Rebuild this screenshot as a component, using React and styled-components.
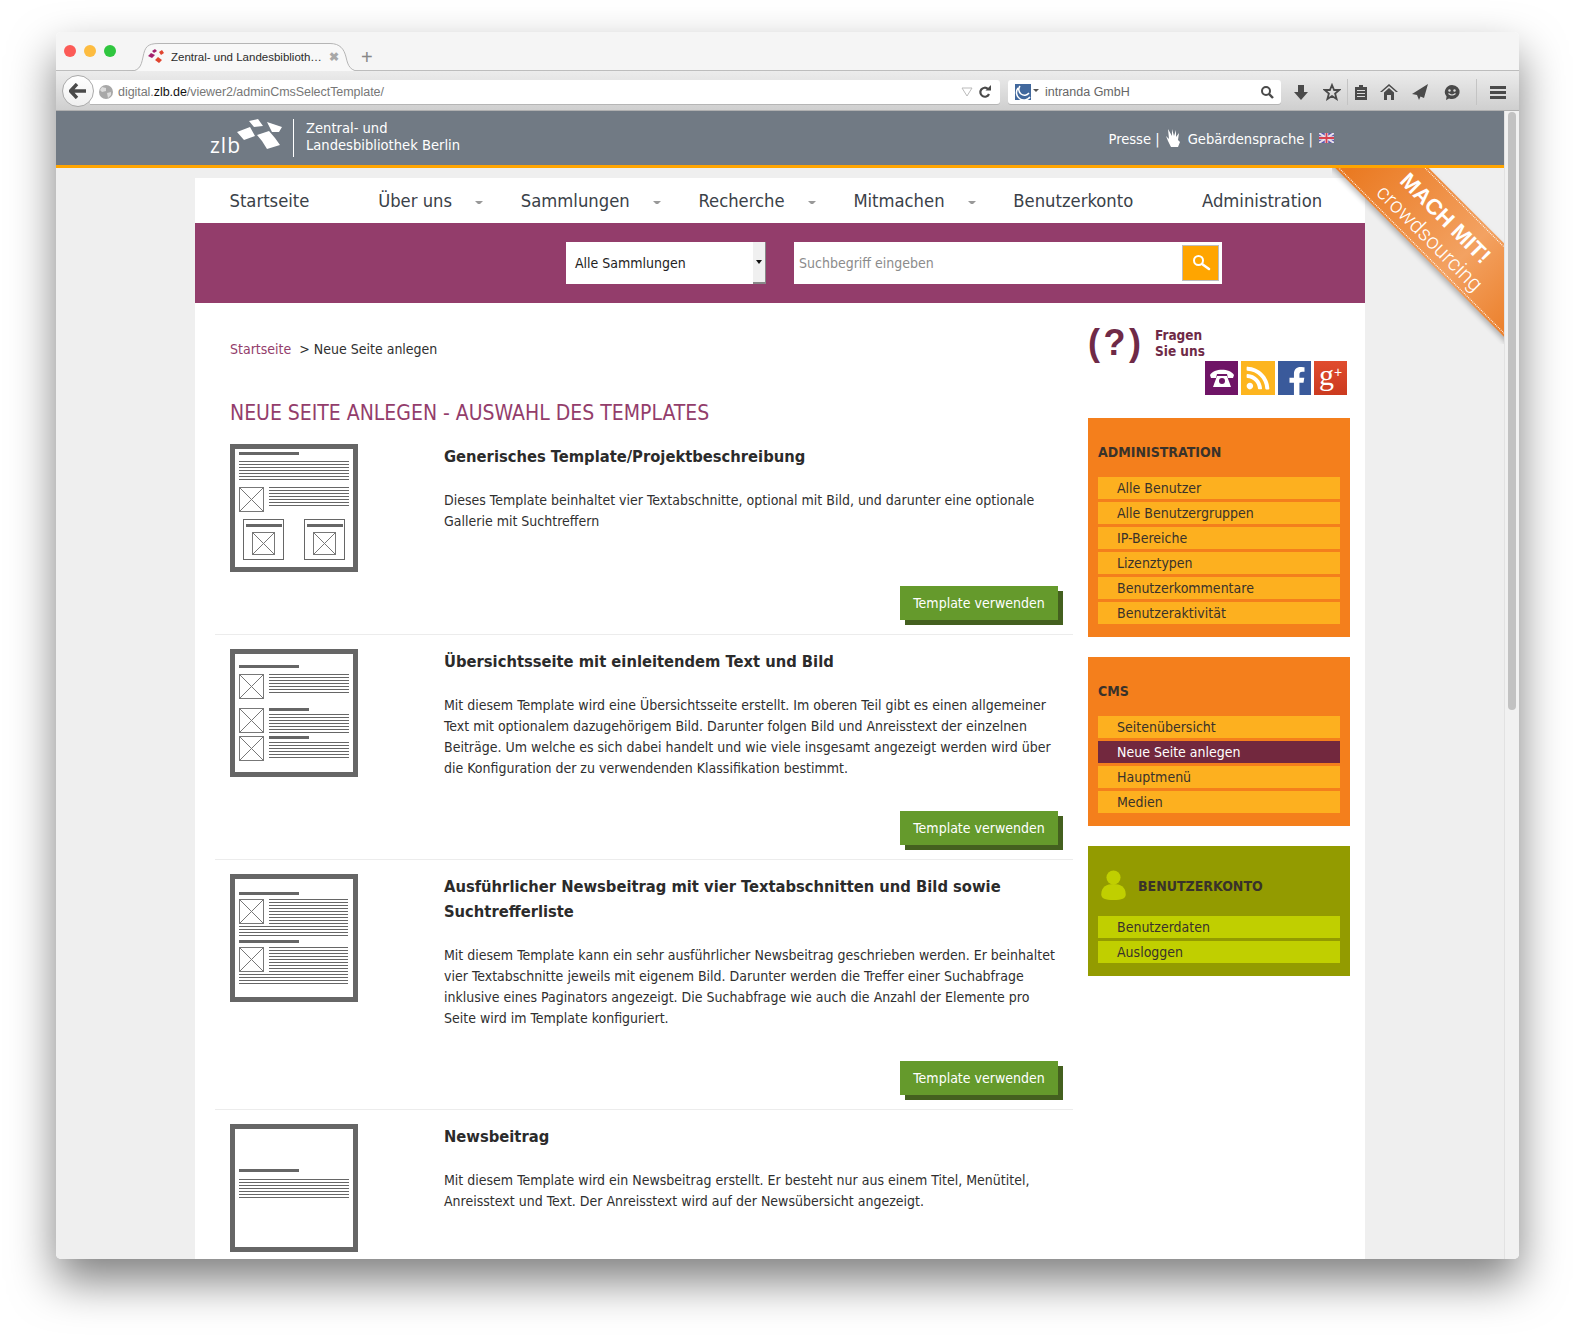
import styled, { createGlobalStyle } from "styled-components";
import { FaFacebookF, FaRss } from "react-icons/fa";

const GlobalStyle = createGlobalStyle`
  html, body {
    margin: 0;
    padding: 0;
    background: #fff;
  }
  body {
    width: 1575px;
    height: 1339px;
    overflow: hidden;
    font-family: "DejaVu Sans", sans-serif;
    font-stretch: condensed;
    color: #2f2f2f;
  }
`;

const Stage = styled.div`
  padding: 32px 56px 0;
`;

const Win = styled.div`
  position: relative;
  width: 1463px;
  height: 1227px;
  border-radius: 5px;
  overflow: hidden;
  display: flex;
  flex-direction: column;
`;

const WinShadow = styled.div`
  width: 1463px;
  height: 1227px;
  border-radius: 5px;
  box-shadow: 0 22px 45px rgba(0, 0, 0, 0.5);
`;

const TabBar = styled.div`
  height: 38px;
  flex: none;
  background: #f5f5f5;
  border-bottom: 1px solid #bdbdbd;
  display: flex;
  align-items: flex-end;
  font-family: "Liberation Sans", sans-serif;
  font-stretch: normal;
`;

const Lights = styled.div`
  display: flex;
  gap: 8px;
  padding: 0 0 13px 8px;
`;

const Light = styled.span`
  width: 12px;
  height: 12px;
  border-radius: 50%;
  background: ${(p) => p.$c};
`;

const Tab = styled.div`
  position: relative;
  width: 235px;
  height: 28px;
  margin-left: 11px;
  margin-bottom: -1px;
  display: flex;
  align-items: center;
  padding-left: 21px;
  box-sizing: border-box;
  font-size: 11.5px;
  color: #2b2b2b;
  gap: 7px;
`;

const TabShape = styled.svg`
  position: absolute;
  left: 0;
  top: 0;
`;

const TabIcon = styled.svg`
  position: relative;
`;

const TabLabel = styled.span`
  position: relative;
  width: 150px;
  white-space: nowrap;
`;

const TabClose = styled.span`
  position: relative;
  font-size: 12px;
  font-weight: bold;
  color: #a8a8a8;
  margin-left: 1px;
`;

const NewTab = styled.span`
  font-size: 20px;
  color: #888;
  margin: 0 0 3px -1px;
  line-height: 20px;
`;

const ToolBar = styled.div`
  position: relative;
  height: 40px;
  flex: none;
  background: linear-gradient(#ececec, #cfcfcf);
  border-bottom: 1px solid #b0b0b0;
  box-sizing: border-box;
  display: flex;
  align-items: center;
  padding: 2px 0 0 34px;
  font-family: "Liberation Sans", sans-serif;
  font-stretch: normal;
`;

const BackButton = styled.div`
  position: absolute;
  left: 6px;
  top: 4px;
  width: 32px;
  height: 32px;
  border-radius: 50%;
  background: linear-gradient(#fff, #f0f0f0);
  border: 1px solid #aaa;
  box-sizing: border-box;
  display: flex;
  align-items: center;
  justify-content: center;
  z-index: 1;
`;

const UrlBar = styled.div`
  width: 910px;
  height: 24px;
  background: #fff;
  border-radius: 0 3px 3px 0;
  box-shadow: 0 1px 0 #b5b5b5;
  display: flex;
  align-items: center;
  padding-left: 9px;
  box-sizing: border-box;
  font-size: 12.5px;
  color: #777;
`;

const UrlText = styled.span`
  margin-left: 5px;
  flex: 1;
  letter-spacing: -0.05px;
  b {
    font-weight: normal;
    color: #111;
  }
`;

const UrlDrop = styled.svg`
  margin-right: 5px;
`;

const UrlReload = styled.svg`
  margin-right: 8px;
`;

const SearchBar = styled.div`
  width: 273px;
  height: 24px;
  margin-left: 8px;
  background: #fff;
  border-radius: 3px;
  box-shadow: 0 1px 0 #b5b5b5;
  display: flex;
  align-items: center;
  padding: 0 7px;
  box-sizing: border-box;
  font-size: 12.5px;
  color: #666;
`;

const SearchName = styled.span`
  margin-left: 5px;
  flex: 1;
`;

const ToolIcons = styled.div`
  display: flex;
  align-items: center;
  margin-left: 4px;
`;

const ToolIcon = styled.div`
  width: ${(p) => p.$w}px;
  height: 26px;
  margin-left: ${(p) => p.$ml || 0}px;
  display: flex;
  align-items: center;
  justify-content: center;
  border-left: ${(p) => (p.$sep ? "1px solid #c4c4c4" : "none")};
  box-sizing: border-box;
`;

const Viewport = styled.div`
  position: relative;
  flex: 1;
  display: flex;
  min-height: 0;
`;

const Page = styled.div`
  width: 1448px;
  background: #efefef;
  overflow: hidden;
`;

const ScrollTrack = styled.div`
  flex: 1;
  background: #f1f1f1;
  border-left: 1px solid #e2e2e2;
  padding: 1px 3px 0 3px;
`;

const ScrollThumb = styled.div`
  height: 598px;
  background: #c2c2c2;
  border-radius: 4px;
`;

const Header = styled.div`
  height: 54px;
  background: #717a84;
  border-bottom: 3px solid #ffa500;
  display: flex;
  align-items: center;
  padding: 0 170px 0 152px;
  color: #fff;
`;

const Logo = styled.div`
  position: relative;
  width: 85px;
  height: 38px;
`;

const LogoWord = styled.span`
  position: absolute;
  left: 2px;
  bottom: 1px;
  font-family: "Open Sans", sans-serif;
  font-stretch: normal;
  font-size: 21px;
  line-height: 21px;
  letter-spacing: 1px;
`;

const LogoMark = styled.svg`
  position: absolute;
  left: 29px;
  top: 0;
`;

const LogoName = styled.div`
  border-left: 1px solid #fff;
  padding: 0 0 5px 12px;
  height: 38px;
  box-sizing: border-box;
  display: flex;
  flex-direction: column;
  justify-content: center;
  font-size: 14.6px;
  line-height: 17px;
`;

const HeaderLinks = styled.div`
  margin-left: auto;
  display: flex;
  align-items: center;
  gap: 6px;
  font-size: 14.6px;
`;

const Column = styled.div`
  width: 1170px;
  margin: 10px 0 0 139px;
`;

const Nav = styled.div`
  height: 45px;
  background: #fff;
  display: flex;
  align-items: center;
  gap: 68.8px;
  padding-left: 34.5px;
  font-size: 18.25px;
  color: #3a4148;
  white-space: nowrap;
`;

const NavItem = styled.span`
  position: relative;
  ${(p) =>
    p.$sub &&
    `&::after {
      content: "";
      position: absolute;
      right: -31px;
      top: 11px;
      border: 3px solid transparent;
      border-top: 3px solid #999;
      border-bottom: 0;
      width: 2px;
    }`}
`;

const SearchStrip = styled.div`
  height: 80px;
  background: #933d6b;
  display: flex;
  align-items: center;
  padding-left: 371px;
`;

const SelectBox = styled.div`
  width: 200px;
  height: 42px;
  background: #fff;
  display: flex;
  align-items: center;
  justify-content: space-between;
  padding-left: 9px;
  box-sizing: border-box;
  font-size: 14px;
  color: #222;
  margin-right: 28px;
`;

const SelectArrow = styled.div`
  width: 13px;
  height: 42px;
  background: #f0f0f0;
  border-right: 1px solid #888;
  border-bottom: 2px solid #888;
  box-sizing: border-box;
  display: flex;
  align-items: center;
  justify-content: center;
  &::after {
    content: "";
    border: 3px solid transparent;
    border-top: 4px solid #111;
    border-bottom: 0;
  }
`;

const SearchField = styled.div`
  width: 428px;
  height: 42px;
  background: #fff;
  display: flex;
  align-items: center;
  justify-content: space-between;
  padding: 0 3px 0 5px;
  box-sizing: border-box;
  font-size: 14px;
  color: #8b8b8b;
`;

const SearchButton = styled.div`
  width: 37px;
  height: 36px;
  background: #ffa500;
  border: 1px solid #bdbdbd;
  box-sizing: border-box;
  display: flex;
  align-items: center;
  justify-content: center;
`;

const Main = styled.div`
  background: #fff;
  height: 960px;
  display: flex;
  padding-left: 20px;
`;

const Content = styled.div`
  width: 858px;
  margin-right: 15px;
`;

const Crumbs = styled.div`
  padding: 36px 0 0 15px;
  font-size: 14px;
  line-height: 20px;
  color: #2f2f2f;
  a {
    color: #933d6b;
    margin-right: 4px;
  }
`;

const Heading = styled.h1`
  margin: 40px 0 3px 15px;
  font-size: 21px;
  line-height: 28px;
  font-weight: normal;
  color: #933d6b;
`;

const Item = styled.div`
  display: flex;
  height: ${(p) => p.$h}px;
  padding: 14px 15px 0;
  box-sizing: border-box;
  border-bottom: ${(p) => (p.$last ? "none" : "1px solid #ececec")};
`;

const Thumb = styled.svg`
  flex: none;
  display: block;
`;

const ItemBody = styled.div`
  margin-left: 86px;
  flex: 1;
  display: flex;
  flex-direction: column;
  padding-bottom: 14px;
`;

const ItemTitle = styled.h2`
  margin: 0 0 21px;
  font-size: 16.4px;
  line-height: 25px;
  font-weight: bold;
  color: #2b2b2b;
`;

const ItemText = styled.p`
  margin: 0;
  font-size: 14px;
  line-height: 21px;
  color: #2f2f2f;
  white-space: nowrap;
`;

const UseButton = styled.div`
  width: 158px;
  height: 34px;
  background: #659a2c;
  box-shadow: 5px 5px 0 #44601f;
  color: #fff;
  font-size: 14px;
  display: flex;
  align-items: center;
  justify-content: center;
`;

const ButtonRow = styled.div`
  margin-top: auto;
  display: flex;
  justify-content: flex-end;
`;

const Side = styled.div`
  width: 262px;
  padding-top: 24px;
`;

const AskBlock = styled.div`
  display: flex;
  color: #6f2a47;
  height: 34px;
`;

const AskMark = styled.div`
  width: 67px;
  font-family: "Liberation Sans", sans-serif;
  font-stretch: normal;
  font-weight: bold;
  font-size: 36px;
  line-height: 32px;
  letter-spacing: 3.5px;
  white-space: nowrap;
`;

const AskText = styled.div`
  font-size: 13.5px;
  line-height: 16px;
  font-weight: bold;
`;

const Socials = styled.div`
  display: flex;
  justify-content: flex-end;
  gap: 3px;
  padding-right: 3px;
  margin-bottom: 23px;
`;

const Social = styled.div`
  width: ${(p) => p.$w || 33}px;
  height: 34px;
  background: ${(p) => p.$bg};
  color: #fff;
  display: flex;
  align-items: center;
  justify-content: center;
`;

const FbGlyph = styled(FaFacebookF)`
  width: 24px;
  height: 28px;
  margin: 6px 0 0 5px;
`;

const GooglePlus = styled.span`
  font-family: "Liberation Serif", serif;
  font-stretch: normal;
  font-size: 30px;
  line-height: 30px;
  margin-top: -6px;
  sup {
    font-family: "Liberation Sans", sans-serif;
    font-size: 14px;
    line-height: 0;
    vertical-align: 8px;
  }
`;

const Panel = styled.div`
  background: ${(p) => p.$bg};
  padding: 0 10px 13px;
  margin-bottom: 20px;
`;

const PanelHead = styled.div`
  height: ${(p) => p.$h || 59}px;
  padding-top: 9px;
  box-sizing: border-box;
  display: flex;
  align-items: center;
  gap: 12px;
  font-size: 14px;
  font-weight: bold;
  color: #39322a;
`;

const PersonIcon = styled.svg`
  margin-left: 3px;
`;

const PanelLink = styled.div`
  height: 22px;
  margin-bottom: 3px;
  padding-left: 19px;
  background: ${(p) => (p.$active ? "#72283e" : p.$bg)};
  color: ${(p) => (p.$active ? "#fff" : "#39322a")};
  font-size: 14px;
  line-height: 22px;
  &:last-child {
    margin-bottom: 0;
  }
`;

const RibbonClip = styled.div`
  position: absolute;
  left: 1276px;
  top: 57px;
  width: 172px;
  height: 176px;
  overflow: hidden;
`;

const RibbonBand = styled.div`
  position: absolute;
  left: -41px;
  top: 26px;
  width: 300px;
  height: 66px;
  transform: rotate(45deg);
  background: linear-gradient(90deg, #ea7a22 15%, #f3a262 62%, #ea7a22 95%);
  box-shadow: 0 3px 5px rgba(0, 0, 0, 0.25);
  color: #fff;
  font-family: "Liberation Sans", sans-serif;
  font-stretch: normal;
  text-align: center;
  box-sizing: border-box;
  padding-top: 11px;
  &::before {
    content: "";
    position: absolute;
    left: 0;
    right: 0;
    top: 2px;
    bottom: 2px;
    border-top: 1px dotted #fff;
    border-bottom: 1px dotted #fff;
  }
`;

const RibbonTop = styled.div`
  font-weight: bold;
  font-size: 22px;
  line-height: 25px;
  transform: translateX(-3px);
`;

const RibbonSub = styled.div`
  font-family: "Roboto", "Liberation Sans", sans-serif;
  font-size: 21.5px;
  line-height: 25px;
  font-weight: 300;
`;

const Frame = () => <rect x="2.5" y="2.5" width="123" height="123" fill="#fff" stroke="#666" strokeWidth="5" />;

const Bar = ({ x = 9, y, w = 60, h = 3 }) => <rect x={x} y={y} width={w} height={h} fill="#666" />;

const Lines = ({ x = 9, y, w = 110, n = 7 }) => (
  <>
    {Array.from({ length: n }, (_, i) => (
      <rect key={i} x={x} y={y + i * 3} width={w} height="1" fill="#666" />
    ))}
  </>
);

const Pic = ({ x = 9, y, s = 25 }) => (
  <g fill="none" stroke="#777" strokeWidth="1">
    <rect x={x + 0.5} y={y + 0.5} width={s - 1} height={s - 1} />
    <path d={`M${x} ${y}L${x + s} ${y + s}M${x + s} ${y}L${x} ${y + s}`} />
  </g>
);

const Card = ({ x }) => (
  <g>
    <rect x={x + 0.5} y="75.5" width="40" height="40" fill="none" stroke="#666" />
    <Bar x={x + 3} y={80} w={36} />
    <Pic x={x + 9} y={88} s={23} />
  </g>
);

const ThumbBox = ({ children }) => (
  <Thumb width="128" height="128" viewBox="0 0 128 128">
    <Frame />
    {children}
  </Thumb>
);

const thumbs = [
  <ThumbBox key="a">
    <Bar y={8} />
    <Lines y={17} />
    <Pic y={43} />
    <Lines x={39} y={43} w={80} />
    <Card x={13} />
    <Card x={74} />
  </ThumbBox>,
  <ThumbBox key="b">
    <Bar y={16} />
    <Pic y={25} />
    <Lines x={39} y={25} w={80} />
    <Pic y={59} />
    <Bar x={39} y={59} w={40} />
    <Lines x={39} y={65} w={80} />
    <Pic y={87} />
    <Bar x={39} y={87} w={40} />
    <Lines x={39} y={93} w={80} n={6} />
  </ThumbBox>,
  <ThumbBox key="c">
    <Bar y={18} />
    <Pic y={25} />
    <Lines x={39} y={25} w={79} n={9} />
    <Lines y={52} w={109} n={4} />
    <Bar y={66} />
    <Pic y={73} />
    <Lines x={39} y={73} w={79} n={9} />
    <Lines y={100} w={109} n={4} />
  </ThumbBox>,
  <ThumbBox key="d">
    <Bar y={45} />
    <Lines y={55} />
  </ThumbBox>,
];

const items = [
  {
    h: 205,
    title: "Generisches Template/Projektbeschreibung",
    text: ["Dieses Template beinhaltet vier Textabschnitte, optional mit Bild, und darunter eine optionale", "Gallerie mit Suchtreffern"],
  },
  {
    h: 225,
    title: "Übersichtsseite mit einleitendem Text und Bild",
    text: [
      "Mit diesem Template wird eine Übersichtsseite erstellt. Im oberen Teil gibt es einen allgemeiner",
      "Text mit optionalem dazugehörigem Bild. Darunter folgen Bild und Anreisstext der einzelnen",
      "Beiträge. Um welche es sich dabei handelt und wie viele insgesamt angezeigt werden wird über",
      "die Konfiguration der zu verwendenden Klassifikation bestimmt.",
    ],
  },
  {
    h: 250,
    title: ["Ausführlicher Newsbeitrag mit vier Textabschnitten und Bild sowie", "Suchtrefferliste"],
    text: [
      "Mit diesem Template kann ein sehr ausführlicher Newsbeitrag geschrieben werden. Er beinhaltet",
      "vier Textabschnitte jeweils mit eigenem Bild. Darunter werden die Treffer einer Suchabfrage",
      "inklusive eines Paginators angezeigt. Die Suchabfrage wie auch die Anzahl der Elemente pro",
      "Seite wird im Template konfiguriert.",
    ],
  },
  {
    h: 160,
    title: "Newsbeitrag",
    text: [
      "Mit diesem Template wird ein Newsbeitrag erstellt. Er besteht nur aus einem Titel, Menütitel,",
      "Anreisstext und Text. Der Anreisstext wird auf der Newsübersicht angezeigt.",
    ],
    last: true,
  },
];

const breakLines = (v) =>
  (Array.isArray(v) ? v : [v]).map((l, i) => (
    <span key={i}>
      {i > 0 && <br />}
      {l}
    </span>
  ));

const nav = [
  ["Startseite"],
  ["Über uns", true],
  ["Sammlungen", true],
  ["Recherche", true],
  ["Mitmachen", true],
  ["Benutzerkonto"],
  ["Administration"],
];

const Loupe = ({ size = 20, color = "#fff" }) => (
  <svg width={size} height={size} viewBox="0 0 20 20" fill="none" stroke={color}>
    <circle cx="7.5" cy="7.5" r="4.5" strokeWidth="2" />
    <path d="M11 11l7 5" strokeWidth="2.6" strokeLinecap="round" />
  </svg>
);

const Favicon = () => (
  <TabIcon width="16" height="16" viewBox="0 0 16 16">
    <path d="M0 7l3-3 4 2-3 3zM4 2l3-2 2 2-3 2z" fill="#a3206e" />
    <path d="M7 11l3-3 4 3-3 3zM11 3l3-2 2 3-3 2z" fill="#e0452f" />
  </TabIcon>
);

const Globe = () => (
  <svg width="14" height="14" viewBox="0 0 14 14">
    <circle cx="7" cy="7" r="7" fill="#a8a8a8" />
    <path d="M3 2l4 1 0 3-4 1-2-2zM8 8l4-1 0 3-3 3z" fill="#dcdcdc" />
  </svg>
);

const icons = {
  down: <path d="M6 2h6v7h4l-7 8-7-8h4z" fill="#4a4a4a" />,
  star: <path d="M9 2l2.100 5h5.200l-4.200 3.500 1.500 5.500L9 13l-4.600 3 1.500-5.500L1.700 7h5.200z" fill="none" stroke="#4a4a4a" strokeWidth="1.800" />,
  list: (
    <g fill="#4a4a4a">
      <path d="M3 4h4V2h4v2h4v13H3z" />
      <path d="M5 7h8v1H5zM5 10h8v1H5zM5 13h8v1H5z" fill="#d8d8d8" />
    </g>
  ),
  home: (
    <g fill="#4a4a4a">
      <path d="M9 1l9 8h-2L9 3 2 9H0z" />
      <path d="M9 5l5 4.500V17h-3v-5H7v5H4V9.500z" />
    </g>
  ),
  send: <path d="M17 1L1 11l5 1 2 5 1.500-3.500L13 15z" fill="#4a4a4a" />,
  chat: (
    <g>
      <path d="M9 2a7.500 7 0 1 1-3 13.400L3 17l.600-3.500A7.500 7 0 0 1 9 2z" fill="#4a4a4a" />
      <circle cx="6.500" cy="7.500" r="1.200" fill="#ddd" />
      <circle cx="11.500" cy="7.500" r="1.200" fill="#ddd" />
      <path d="M5.500 10.500q3.500 3 7 0" stroke="#ddd" strokeWidth="1.200" fill="none" />
    </g>
  ),
  menu: <path d="M1 3h16v3H1zM1 8h16v3H1zM1 13h16v3H1z" fill="#4a4a4a" />,
};

const toolIcons = [
  { name: "down", w: 31 },
  { name: "star", w: 31 },
  { name: "list", w: 26, sep: true },
  { name: "home", w: 31 },
  { name: "send", w: 32 },
  { name: "chat", w: 32 },
  { name: "menu", w: 43, sep: true, ml: 8 },
];

const Glyph = ({ name }) => (
  <svg width="18" height="18" viewBox="0 0 18 18">
    {icons[name]}
  </svg>
);

function App() {
  return (
    <>
      <GlobalStyle />
      <Stage>
        <WinShadow>
          <Win>
            <TabBar>
              <Lights>
                <Light $c="#fc5b57" />
                <Light $c="#fdbc40" />
                <Light $c="#2fc63f" />
              </Lights>
              <Tab>
                <TabShape width="235" height="29" viewBox="0 0 235 29">
                  <path d="M0 28.500C12 28.500 14 24 16 14 18 4 20 .5 32 .5H203C213 .5 217 6 219 14 221 23 223 28.500 235 28.500" fill="#f8f8f8" stroke="#b5b5b5" />
                </TabShape>
                <Favicon />
                <TabLabel>Zentral- und Landesbiblioth…</TabLabel>
                <TabClose>✖</TabClose>
              </Tab>
              <NewTab>+</NewTab>
            </TabBar>
            <ToolBar>
              <BackButton>
                <svg width="18" height="16" viewBox="0 0 18 16">
                  <path d="M8 1L1.500 8 8 15M2 8h15" fill="none" stroke="#4a4a4a" strokeWidth="3.400" />
                </svg>
              </BackButton>
              <UrlBar>
                <Globe />
                <UrlText>
                  digital.<b>zlb.de</b>/viewer2/adminCmsSelectTemplate/
                </UrlText>
                <UrlDrop width="12" height="10" viewBox="0 0 12 10">
                  <path d="M1 1h10L6 9z" fill="none" stroke="#bbb" />
                </UrlDrop>
                <UrlReload width="14" height="14" viewBox="0 0 14 14">
                  <path d="M11 9a4.500 4.500 0 1 1-1-5" fill="none" stroke="#4a4a4a" strokeWidth="2.200" />
                  <path d="M7.500 5.500H13V0z" fill="#4a4a4a" />
                </UrlReload>
              </UrlBar>
              <SearchBar>
                <svg width="25" height="16" viewBox="0 0 25 16">
                  <rect width="16" height="16" fill="#41689d" />
                  <path d="M3 4a7 7 0 0 0 12 9M5 2a5 5 0 0 0 9 7" fill="none" stroke="#fff" strokeWidth="1.500" />
                  <path d="M18 5h6l-3 3z" fill="#555" />
                </svg>
                <SearchName>intranda GmbH</SearchName>
                <svg width="14" height="14" viewBox="0 0 14 14" fill="none" stroke="#4a4a4a">
                  <circle cx="6" cy="6" r="4" strokeWidth="2" />
                  <path d="M9 9l4 4" strokeWidth="2.400" />
                </svg>
              </SearchBar>
              <ToolIcons>
                {toolIcons.map(({ name, w, sep, ml }) => (
                  <ToolIcon key={name} $w={w} $sep={sep} $ml={ml}>
                    <Glyph name={name} />
                  </ToolIcon>
                ))}
              </ToolIcons>
            </ToolBar>
            <Viewport>
              <Page>
                <Header>
                  <Logo>
                    <LogoWord>zlb</LogoWord>
                    <LogoMark width="46" height="30" viewBox="0 0 46 30" fill="#fff">
                      <path d="M0 13l13-5 5 9-11 4zM12 2l9-2 5 7-9 1zM30 3l15 5-3 5-7 0zM20 16l12-4 6 7 5 7-13 4-5-8z" />
                    </LogoMark>
                  </Logo>
                  <LogoName>
                    <span>Zentral- und</span>
                    <span>Landesbibliothek Berlin</span>
                  </LogoName>
                  <HeaderLinks>
                    <span>Presse |</span>
                    <svg width="16" height="20" viewBox="0 0 16 20" fill="#fff">
                      <path d="M2 1l4 7 0-7 2 7 2-6 0 7 3-4-1 7 2 2-2 5H5l-3-6-2-5 3 3z" />
                    </svg>
                    <span>Gebärdensprache |</span>
                    <svg width="15" height="10" viewBox="0 0 15 10">
                      <rect width="15" height="10" fill="#5a58b0" />
                      <path d="M0 0l15 10M15 0L0 10" stroke="#e8dfe8" strokeWidth="2" />
                      <path d="M7.500 0v10M0 5h15" stroke="#e8dfe8" strokeWidth="3.500" />
                      <path d="M7.500 0v10M0 5h15" stroke="#d8404f" strokeWidth="1.800" />
                    </svg>
                  </HeaderLinks>
                </Header>
                <Column>
                  <Nav>
                    {nav.map(([label, sub]) => (
                      <NavItem key={label} $sub={sub}>
                        {label}
                      </NavItem>
                    ))}
                  </Nav>
                  <SearchStrip>
                    <SelectBox>
                      Alle Sammlungen
                      <SelectArrow />
                    </SelectBox>
                    <SearchField>
                      Suchbegriff eingeben
                      <SearchButton>
                        <Loupe />
                      </SearchButton>
                    </SearchField>
                  </SearchStrip>
                  <Main>
                    <Content>
                      <Crumbs>
                        <a>Startseite</a> &gt; Neue Seite anlegen
                      </Crumbs>
                      <Heading>NEUE SEITE ANLEGEN - AUSWAHL DES TEMPLATES</Heading>
                      {items.map((item, i) => (
                        <Item key={i} $h={item.h} $last={item.last}>
                          {thumbs[i]}
                          <ItemBody>
                            <ItemTitle>{breakLines(item.title)}</ItemTitle>
                            <ItemText>{breakLines(item.text)}</ItemText>
                            {!item.last && (
                              <ButtonRow>
                                <UseButton>Template verwenden</UseButton>
                              </ButtonRow>
                            )}
                          </ItemBody>
                        </Item>
                      ))}
                    </Content>
                    <Side>
                      <AskBlock>
                        <AskMark>(?)</AskMark>
                        <AskText>
                          Fragen
                          <br />
                          Sie uns
                        </AskText>
                      </AskBlock>
                      <Socials>
                        <Social $bg="#6f1466">
                          <svg width="26" height="20" viewBox="0 0 26 20" fill="#fff">
                            <path d="M1 7C5 0 21 0 25 7l-1 3h-5l-1-4H8L7 10H2z" />
                            <path d="M8 8h10l4 11H4z" />
                            <circle cx="13" cy="13" r="3" fill="#6f1466" />
                          </svg>
                        </Social>
                        <Social $bg="#fdb51f" $w={34}>
                          <FaRss size={26} />
                        </Social>
                        <Social $bg="#3a5a9b">
                          <FbGlyph />
                        </Social>
                        <Social $bg="linear-gradient(#e04c2e, #cb3a1f)">
                          <GooglePlus>
                            g<sup>+</sup>
                          </GooglePlus>
                        </Social>
                      </Socials>
                      <Panel $bg="#f47f1c">
                        <PanelHead>ADMINISTRATION</PanelHead>
                        {["Alle Benutzer", "Alle Benutzergruppen", "IP-Bereiche", "Lizenztypen", "Benutzerkommentare", "Benutzeraktivität"].map((l) => (
                          <PanelLink key={l} $bg="#fdb01f">
                            {l}
                          </PanelLink>
                        ))}
                      </Panel>
                      <Panel $bg="#f47f1c">
                        <PanelHead>CMS</PanelHead>
                        {["Seitenübersicht", "Neue Seite anlegen", "Hauptmenü", "Medien"].map((l) => (
                          <PanelLink key={l} $bg="#fdb01f" $active={l === "Neue Seite anlegen"}>
                            {l}
                          </PanelLink>
                        ))}
                      </Panel>
                      <Panel $bg="#939b00">
                        <PanelHead $h={70}>
                          <PersonIcon width="25" height="32" viewBox="0 0 26 34" fill="#c0cf00">
                            <circle cx="13" cy="8" r="7.500" />
                            <path d="M0 26C0 18 6 15 13 15s13 3 13 11c0 4-4 6-13 6S0 30 0 26z" />
                          </PersonIcon>
                          BENUTZERKONTO
                        </PanelHead>
                        {["Benutzerdaten", "Ausloggen"].map((l) => (
                          <PanelLink key={l} $bg="#c0cf00">
                            {l}
                          </PanelLink>
                        ))}
                      </Panel>
                    </Side>
                  </Main>
                </Column>
              </Page>
              <ScrollTrack>
                <ScrollThumb />
              </ScrollTrack>
              <RibbonClip>
                <RibbonBand>
                  <RibbonTop>MACH MIT!</RibbonTop>
                  <RibbonSub>crowdsourcing</RibbonSub>
                </RibbonBand>
              </RibbonClip>
            </Viewport>
          </Win>
        </WinShadow>
      </Stage>
    </>
  );
}

export default App;
